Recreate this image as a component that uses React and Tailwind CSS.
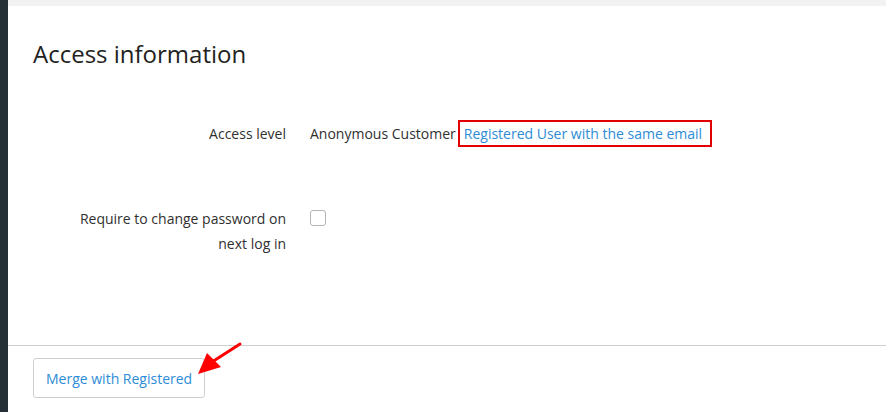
import React from 'react';

const font = { fontFamily: '"Open Sans", "Noto Sans", sans-serif' };

function Arrow() {
  return (
    <svg className="absolute left-[190px] top-[338px]" width="56" height="42" viewBox="0 0 56 42">
      <line x1="50" y1="6" x2="22" y2="24" stroke="#ff0000" strokeWidth="3" strokeLinecap="round" />
      <polygon points="8,36 17,15 31,29" fill="#ff0000" />
    </svg>
  );
}

export default function App() {
  return (
    <div className="relative flex h-[412px] w-[886px] bg-white text-[#303030]" style={font}>
      {/* dark sidebar edge */}
      <div className="w-[8px] shrink-0 bg-[#253036]" />
      <div className="flex flex-1 flex-col">
        <div className="h-[6px] bg-[#f2f2f2]" />
        <div className="flex-1 px-[25px]">
          <h2 className="mt-[32px] text-[24px] leading-[32px] font-normal text-[#222]">Access information</h2>

          <div className="mt-[50px] flex items-center text-[14px]">
            <div className="w-[253px] text-right">Access level</div>
            <div className="ml-[24px] flex items-center">
              <span>Anonymous Customer</span>
              <span className="ml-[2px] border-2 border-[#e30000] px-[4px] py-[1px] pr-[8px] text-[#2d8cd6]">
                Registered User with the same email
              </span>
            </div>
          </div>

          <div className="mt-[59px] flex text-[14px] leading-[25px]">
            <div className="w-[253px] text-right">
              Require to change password on
              <br />
              next log in
            </div>
            <div className="ml-[24px] pt-[4px]">
              <div className="h-[16px] w-[16px] rounded-[3px] border border-[#b5b5b5] bg-white" />
            </div>
          </div>
        </div>
        <div className="h-px bg-[#cfcfcf]" />
        <div className="px-[25px] pt-[12px] pb-[14px]">
          <button className="h-[40px] rounded-[3px] border border-[#cfcfcf] bg-white px-[12px] pt-px text-[14px] leading-[18px] text-[#2d8cd6]">
            Merge with Registered
          </button>
        </div>
      </div>
      <Arrow />
    </div>
  );
}
